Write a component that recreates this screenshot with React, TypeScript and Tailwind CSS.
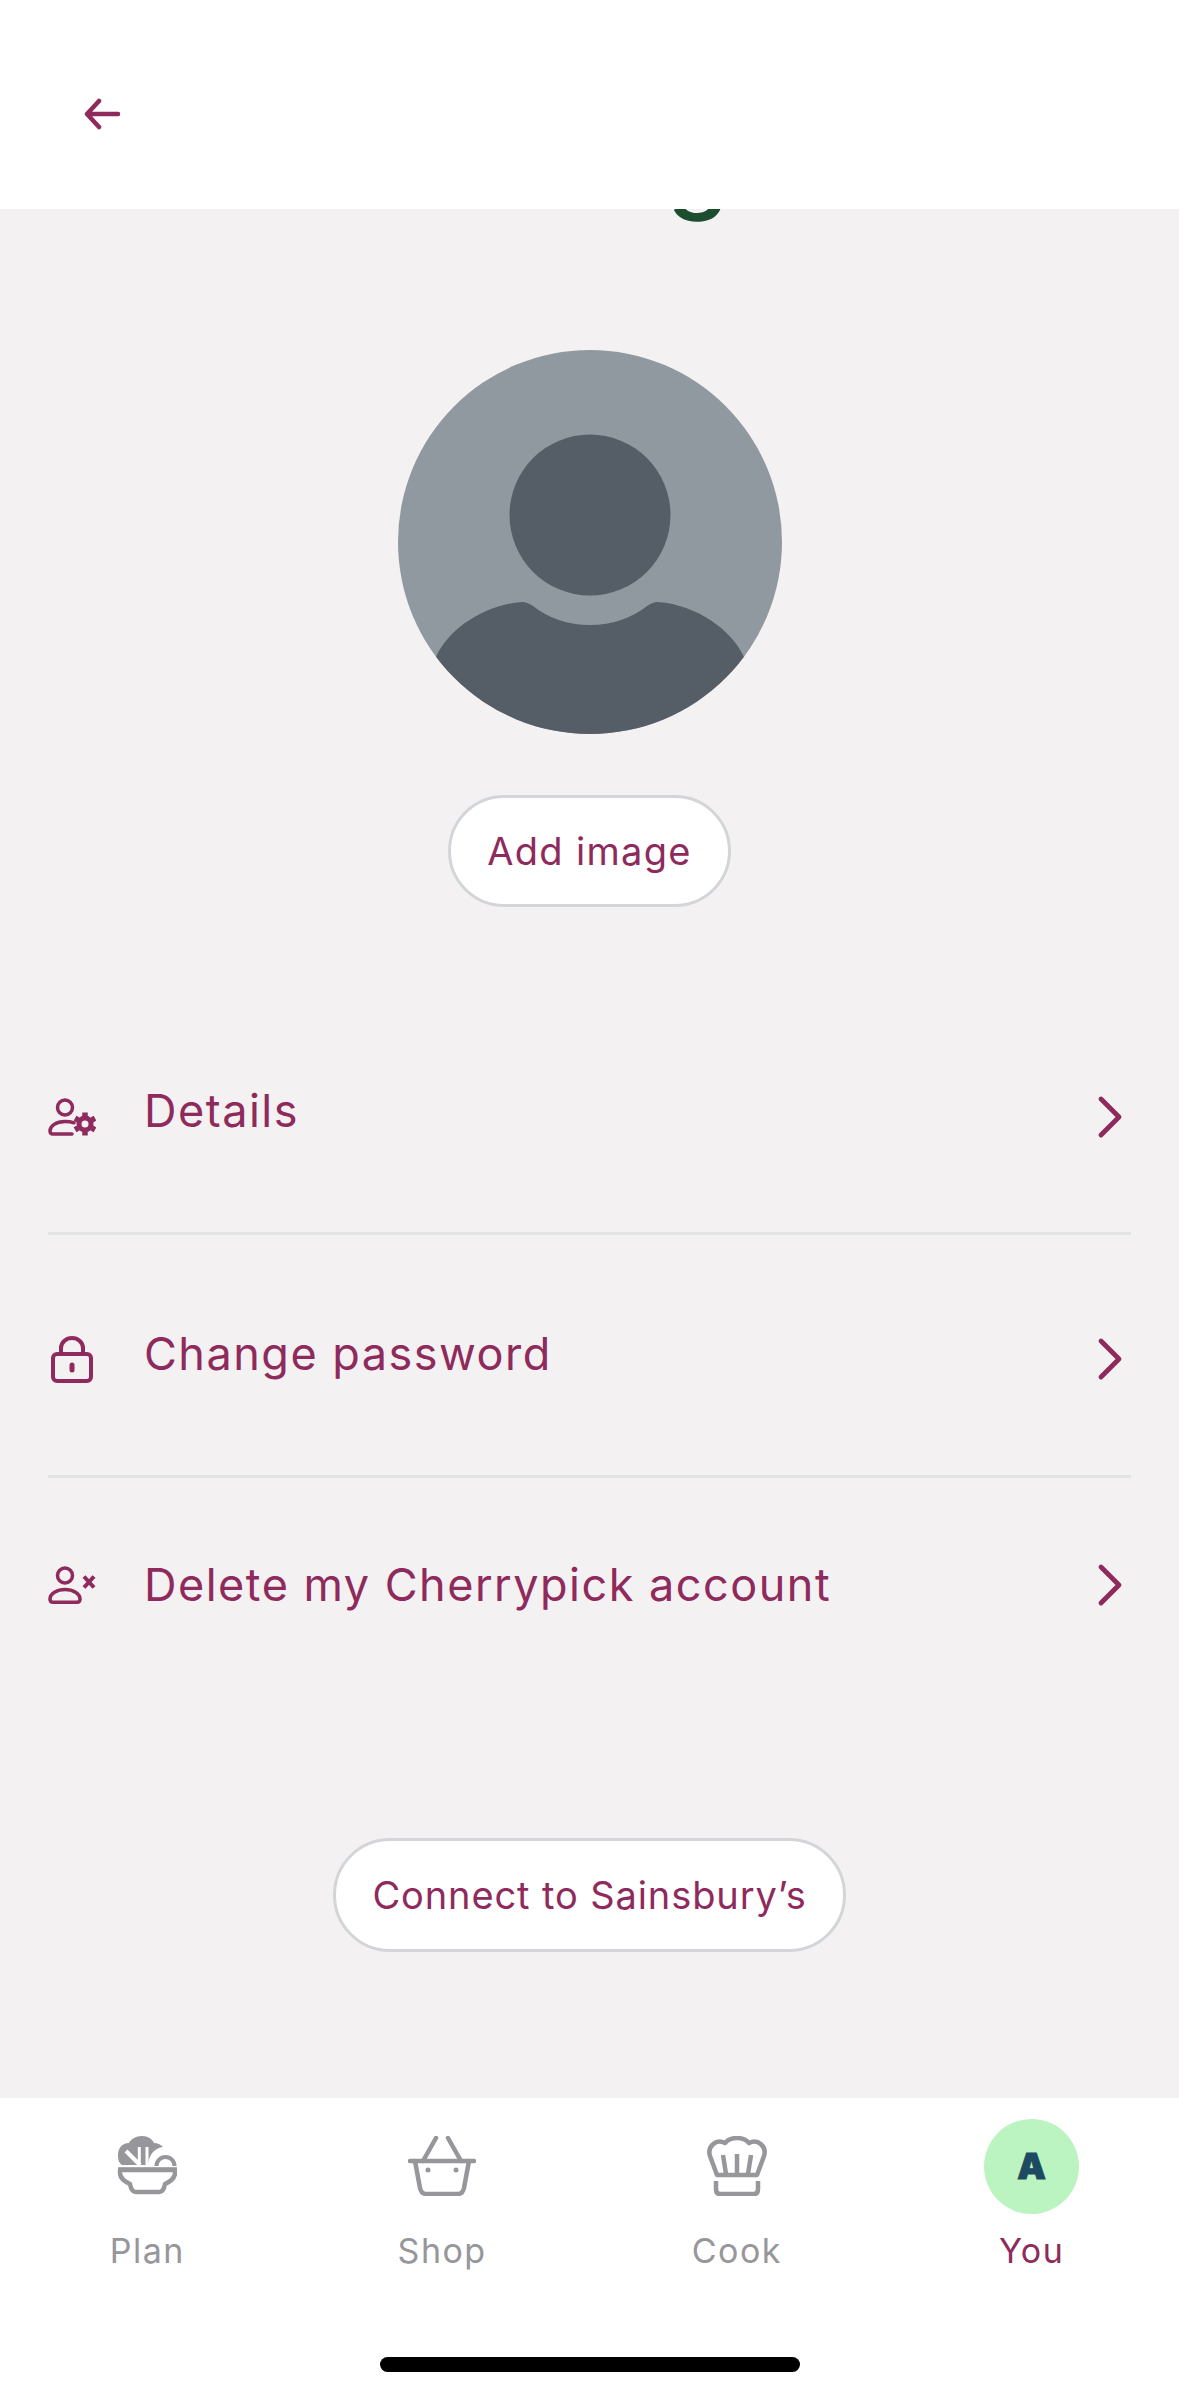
import React from 'react';
import { ChevronRight } from 'lucide-react';

const maroon = '#8f2a5c';
const grey = '#96969b';

function BackArrow() {
  return (
    <svg width="36" height="32" viewBox="0 0 36 32" fill="none" stroke={maroon} strokeWidth="4.500" strokeLinecap="round" strokeLinejoin="round">
      <path d="M3 16h31M15 3 3 16l12 13" />
    </svg>
  );
}

function UserGearIcon() {
  return (
    <svg width="48" height="38" viewBox="0 0 48 38" fill="none" stroke={maroon} strokeWidth="3.500">
      <circle cx="17" cy="9.500" r="7.500" />
      <path d="M26 24.800c-3-1-6-1.300-9-1.300C8 23.500 2 28 2 33c0 2 1 3 3 3h19" strokeLinecap="round" />
      <circle cx="37" cy="26" r="6" strokeWidth="5" />
      {[0, 60, 120, 180, 240, 300].map((deg) => (
        <path key={deg} d="M37 18v-3.500" strokeWidth="5.500" transform={`rotate(${deg} 37 26)`} />
      ))}
    </svg>
  );
}

function LockIcon() {
  return (
    <svg width="42" height="47" viewBox="0 0 42 47" fill="none" stroke={maroon} strokeWidth="4">
      <rect x="2" y="18" width="38" height="27" rx="4" />
      <path d="M10 18v-6a11 10 0 0 1 22 0v6" />
      <path d="M21 29v5" strokeWidth="5" strokeLinecap="round" />
    </svg>
  );
}

function UserXIcon() {
  return (
    <svg width="48" height="38" viewBox="0 0 48 38" fill="none" stroke={maroon} strokeWidth="3.500">
      <circle cx="17" cy="9.500" r="7.500" />
      <path d="M5 36.200h24c2 0 3-1 3-3 0-5.700-7-9.700-15-9.700S2 27.500 2 33.200c0 2 1 3 3 3Z" />
      <path d="M36 10.500 46 21.500M46 10.500 36 21.500" strokeWidth="4" />
    </svg>
  );
}

function PlanIcon() {
  return (
    <svg width="60" height="60" viewBox="0 0 60 60" fill="none">
      <path d="M12 29H5C2 27 1 24 1 19 1 12 5 7 12 7c2-4 7-7 13-7s10 3 12 7c4 0 7 2 9 4-8 1-14 7-15 18H12Z" fill={grey} />
      <path d="M9 15l14 14" stroke="#fff" strokeWidth="4" />
      <path d="M22.300 11v19M30 11v19" stroke="#fff" strokeWidth="3" />
      <path d="M34.500 30a14 14 0 0 1 28 0Z" fill="#fff" />
      <path d="M39.500 30a9 9 0 0 1 18 0" stroke={grey} strokeWidth="4" />
      <path d="M3 34h55v3c0 6-6 9-10 11-1 6-3 8-6 8H19c-3 0-5-2-6-8-4-2-10-5-10-11Z" stroke={grey} strokeWidth="4.500" strokeLinejoin="round" />
      <path d="M1 33.500h59" stroke={grey} strokeWidth="4.500" />
    </svg>
  );
}

function BasketIcon() {
  return (
    <svg width="68" height="60" viewBox="0 0 68 60" fill="none" stroke={grey} strokeWidth="4.500" strokeLinecap="round" strokeLinejoin="round">
      <path d="M2 25h64" />
      <path d="M15 25 28 2M53 25 40 2" />
      <path d="M7 25l5 27c1 4 3 6 6 6h32c3 0 5-2 6-6l5-27" />
      <circle cx="20" cy="34" r="2.500" fill={grey} stroke="none" />
      <circle cx="48" cy="34" r="2.500" fill={grey} stroke="none" />
    </svg>
  );
}

function HatIcon() {
  return (
    <svg width="60" height="60" viewBox="0 0 60 60" fill="none" stroke={grey} strokeWidth="4.500" strokeLinejoin="round">
      <path d="M10 39 3 20C0 11 9 2 18 7c3-3.500 7-5 12-5s9 1.500 12 5c9-5 18 4 15 13l-7 19H10Z" />
      <path d="M16 19l3 19M30 18v20M44 19l-3 19" />
      <path d="M9 45v8c0 3 1 5 4 5h34c3 0 4-2 4-5v-8" />
    </svg>
  );
}

function Row({ icon, label, height, textClass }: { icon: React.ReactNode; label: string; height: string; textClass: string }) {
  return (
    <div className={`flex items-center pl-[48px] pr-[49px] ${height}`}>
      <div className="flex w-[48px] justify-center">{icon}</div>
      <span className={`ml-[48px] flex-1 text-[45px] leading-[56px] tracking-[1.5px] text-[#8f2a5c] ${textClass}`}>{label}</span>
      <ChevronRight size={72} strokeWidth={1.6} color={maroon} className="-mr-[16px]" />
    </div>
  );
}

function NavItem({ icon, label, active }: { icon: React.ReactNode; label: string; active?: boolean }) {
  return (
    <div className="flex flex-col items-center">
      <div className="flex h-[96px] items-center justify-center">{icon}</div>
      <span className={`mt-[17px] text-[34px] leading-[40px] tracking-[1.5px] ${active ? 'text-[#8f2a5c]' : 'text-[#96969b]'}`}>{label}</span>
    </div>
  );
}

export default function App() {
  return (
    <div className="relative flex h-[2396px] w-[1179px] flex-col overflow-hidden bg-[#f3f1f2] font-[Inter,sans-serif]">
      {/* title scrolled away under the header, only the descender is left */}
      <span className="absolute left-[667px] top-[114px] text-[100px] font-medium leading-[100px] text-[#1b4d2e]">g</span>

      <header className="relative flex h-[209px] shrink-0 items-end bg-white pb-[79px] pl-[84px]">
        <BackArrow />
      </header>

      <main className="flex flex-1 flex-col">
        <div className="mt-[141px] flex flex-col items-center">
          <div className="h-[384px] w-[384px] overflow-hidden rounded-full bg-[#9199a0]">
            <svg width="384" height="384" viewBox="0 0 384 384">
              <circle cx="192" cy="165" r="80.500" fill="#555d67" />
              <path d="M38 307C50 280 85 255 124 252c4 0 6 1 11 4 15 12 35 19 57 19s42-7 57-19c5-3 7-4 11-4 39 3 74 28 86 55L384 384H0Z" fill="#555d67" />
            </svg>
          </div>
          <button className="mt-[61px] h-[112px] w-[283px] rounded-full border-[3px] border-[#d3d5d9] bg-white text-[38px] tracking-[1.3px] text-[#8f2a5c]">
            Add image
          </button>
        </div>

        <div className="mt-[95px] flex flex-col">
          <Row icon={<UserGearIcon />} label="Details" height="h-[230px]" textClass="mb-[12px]" />
          <div className="mx-[48px] h-[3px] bg-[#e2e3e4]" />
          <Row icon={<LockIcon />} label="Change password" height="h-[240px] pt-[8px]" textClass="mb-[10px]" />
          <div className="mx-[48px] h-[3px] bg-[#e2e3e4]" />
          <Row icon={<UserXIcon />} label="Delete my Cherrypick account" height="h-[214px]" textClass="mb-0" />
        </div>

        <div className="mt-[146px] flex justify-center">
          <button className="h-[114px] w-[513px] rounded-full border-[3px] border-[#d3d5d9] bg-white text-[38px] tracking-[0.9px] text-[#8f2a5c]">
            Connect to Sainsbury’s
          </button>
        </div>
      </main>

      <nav className="relative h-[298px] shrink-0 bg-white pt-[20px]">
        <div className="grid grid-cols-4">
          <NavItem icon={<PlanIcon />} label="Plan" />
          <NavItem icon={<BasketIcon />} label="Shop" />
          <NavItem icon={<HatIcon />} label="Cook" />
          <NavItem
            active
            label="You"
            icon={
              <div className="flex h-[95px] w-[95px] items-center justify-center rounded-full bg-[#bbf4c1] text-[36px] font-black text-[#1d4a60] [-webkit-text-stroke:1px_#1d4a60]">
                A
              </div>
            }
          />
        </div>
        <div className="mx-auto mt-[86px] h-[15px] w-[420px] rounded-full bg-black" />
      </nav>
    </div>
  );
}
